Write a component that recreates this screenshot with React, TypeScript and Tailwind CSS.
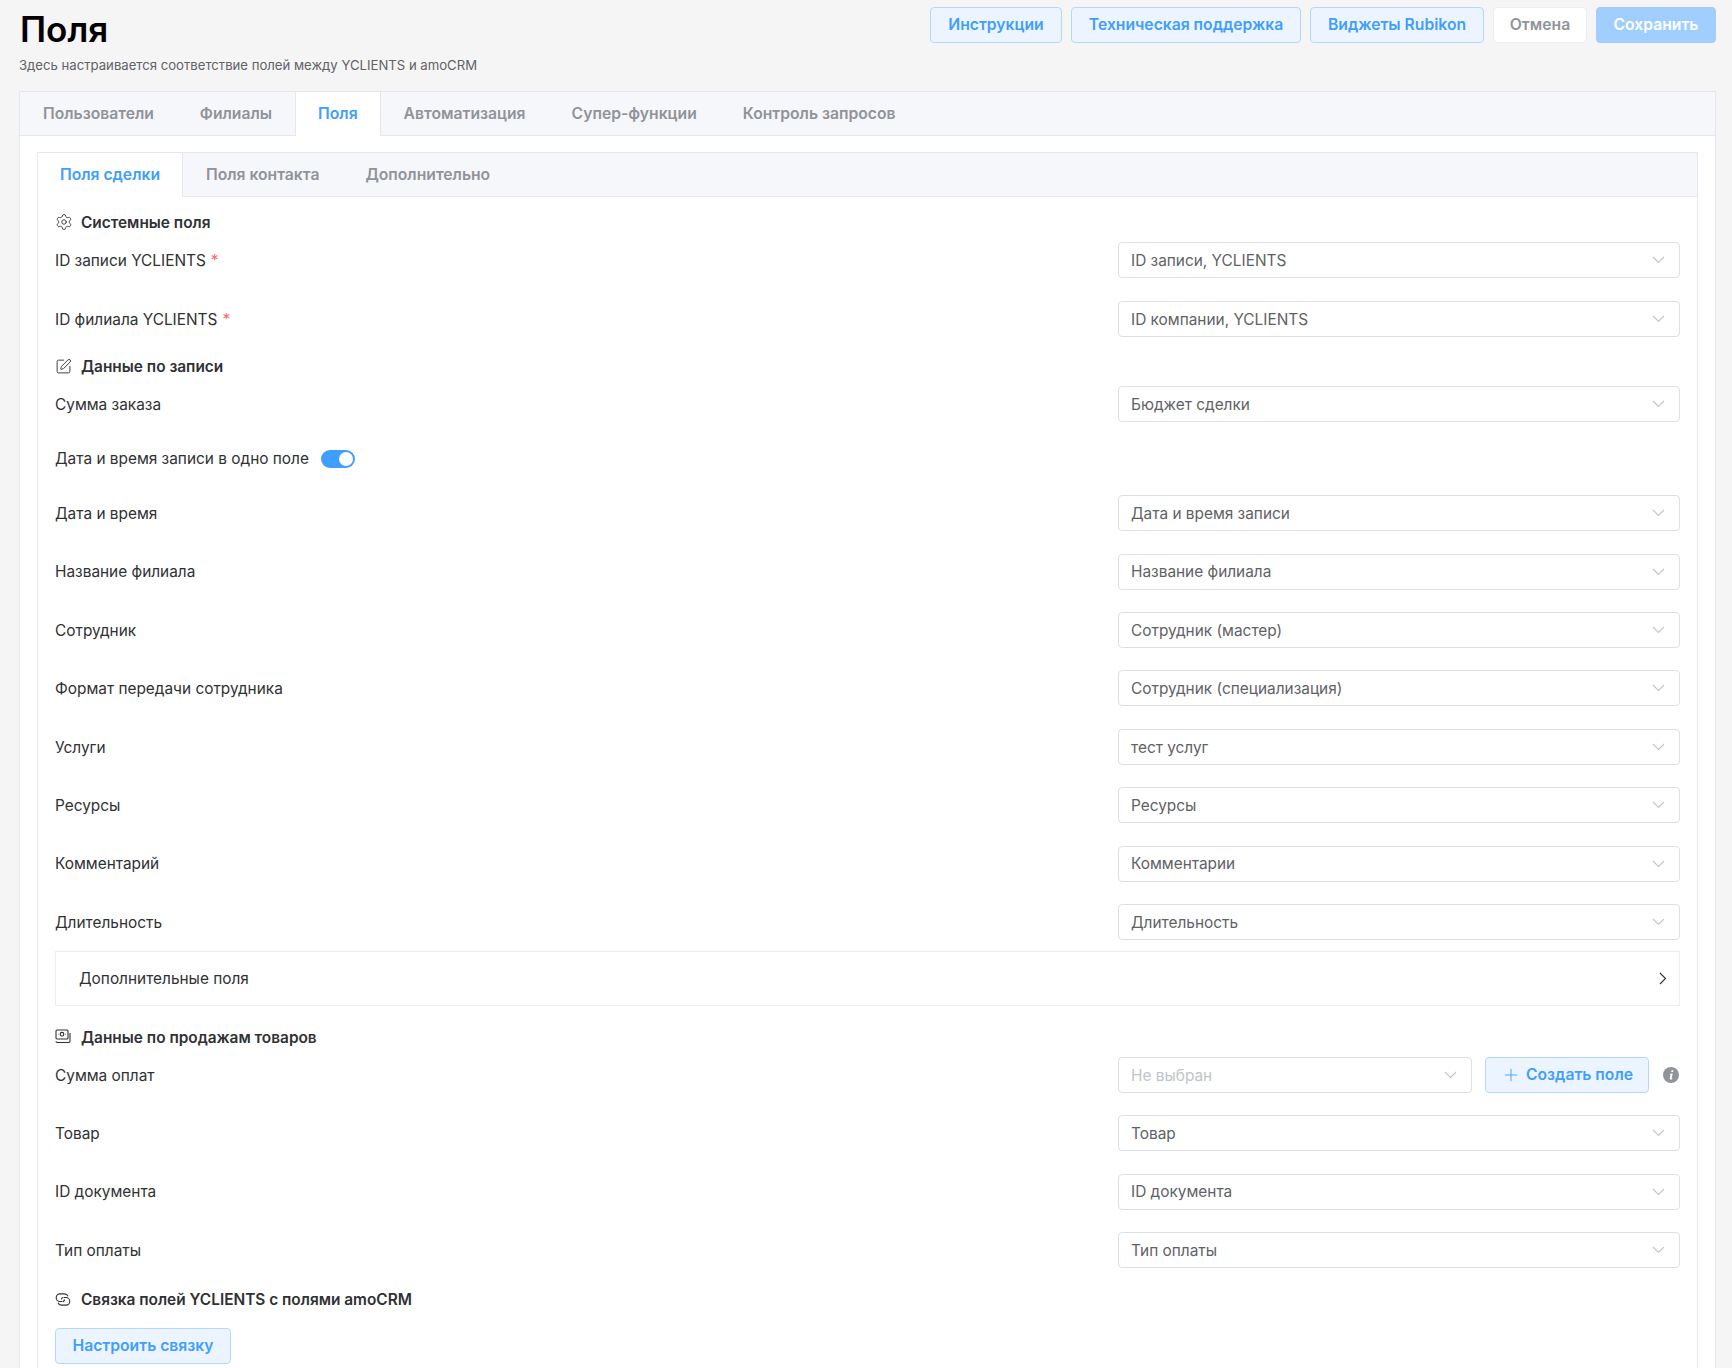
import { ReactNode } from "react";
import { Plus, Settings, SquarePen } from "lucide-react";

const ChevronDown = () => (
  <svg width="13" height="8" viewBox="0 0 13 8" fill="none" stroke="#c0c4cc" strokeWidth="1.1">
    <path d="M1 1l5.5 5.5L12 1" />
  </svg>
);

const ChevronRight = () => (
  <svg width="8" height="13" viewBox="0 0 8 13" fill="none" stroke="#303133" strokeWidth="1.1">
    <path d="M1 1l5.5 5.5L1 12" />
  </svg>
);

const MoneyIcon = () => (
  <svg width="16" height="15" viewBox="0 0 16 15" fill="none" stroke="#303133" strokeWidth="1.1">
    <rect x="1" y="1" width="12" height="9" rx="1" />
    <circle cx="7" cy="5.2" r="1.8" />
    <path d="M4 5.2h-.5M10.5 5.2H10" />
    <path d="M1 12.3c0 .8.5 1.2 1.2 1.2h11.6c.7 0 1.2-.5 1.2-1.2V4" />
  </svg>
);

const LinkIcon = () => (
  <svg width="16" height="15" viewBox="0 0 16 15" fill="none" stroke="#303133" strokeWidth="1.1">
    <path d="M7 9.5H5a3.8 3.8 0 0 1 0-7.6h4.5a3.8 3.8 0 0 1 3.5 2.4" />
    <path d="M9 5.5h2a3.8 3.8 0 0 1 0 7.6H6.5A3.8 3.8 0 0 1 3 10.7" />
    <path d="M6.5 7.5a2 2 0 0 1 2-2" />
    <path d="M9.5 7.5a2 2 0 0 1-2 2" />
  </svg>
);

const InfoIcon = () => (
  <svg width="16" height="16" viewBox="0 0 16 16">
    <circle cx="8" cy="8" r="8" fill="#909399" />
    <path d="M8.6 3.2h1.9l-.4 1.9H8.2zM7.8 6.4h1.9l-1 4.6c-.1.4.2.5.8.3l-.2.9c-1.5.6-2.9.4-2.5-1.3l.6-2.9-.9-.1z" fill="#fff" />
  </svg>
);

function Select({ value, placeholder }: { value: string; placeholder?: boolean }) {
  return (
    <div className="flex h-9 flex-1 items-center justify-between rounded border border-[#dcdfe6] bg-white pl-3 pr-3.5">
      <span className={`pt-px ${placeholder ? "text-[#c0c4cc]" : "text-[#606266]"}`}>{value}</span>
      <ChevronDown />
    </div>
  );
}

function Row({ label, value, required }: { label: string; value: string; required?: boolean }) {
  return (
    <div className="flex h-9 items-center">
      <div className="w-[1063px] pt-px text-[#303133]">
        {label}
        {required && <span className="ml-[5px] text-[#f56c6c]">*</span>}
      </div>
      <Select value={value} />
    </div>
  );
}

function Section({ icon, title }: { icon: ReactNode; title: string }) {
  return (
    <div className="mb-2.5 flex h-5 items-center font-semibold text-[#303133]">
      <span className="flex w-[26px] items-center">{icon}</span>
      <span className="pt-px">{title}</span>
    </div>
  );
}

function Button({ children, className }: { children: ReactNode; className?: string }) {
  return (
    <button className={`flex h-9 items-center justify-center rounded border text-[15.7px] font-semibold ${className}`}>
      {children}
    </button>
  );
}

const primary = "border-[#b3d8ff] bg-[#ecf5ff] text-[#409eff]";

function Tab({ label, active, first }: { label: string; active?: boolean; first?: boolean }) {
  if (active) {
    return (
      <div
        className={`-mb-px flex h-[44px] items-center bg-white px-[22px] text-[15.7px] font-semibold text-[#409eff] ${
          first ? "border-r border-[#e4e7ed]" : "border-x border-[#e4e7ed]"
        }`}
      >
        {label}
      </div>
    );
  }
  return <div className="flex h-[43px] items-center px-[23px] text-[15.7px] font-semibold text-[#909399]">{label}</div>;
}

const dealFields = [
  ["Дата и время", "Дата и время записи"],
  ["Название филиала", "Название филиала"],
  ["Сотрудник", "Сотрудник (мастер)"],
  ["Формат передачи сотрудника", "Сотрудник (специализация)"],
  ["Услуги", "тест услуг"],
  ["Ресурсы", "Ресурсы"],
  ["Комментарий", "Комментарии"],
  ["Длительность", "Длительность"],
];

export default function App() {
  return (
    <div className="h-screen overflow-hidden bg-[#f5f5f5] pl-[19px] pr-4 font-['Inter',sans-serif] text-[15.4px] leading-none">
      <div className="flex h-[91px] justify-between">
        <div>
          <h1 className="pl-px pt-[13px] text-[35px] font-semibold leading-8 text-black">Поля</h1>
          <p className="pt-[12px] text-[13.15px] leading-4 text-[#606266]">
            Здесь настраивается соответствие полей между YCLIENTS и amoCRM
          </p>
        </div>
        <div className="flex gap-[9px] pt-[7px]">
          <Button className={`w-[132px] ${primary}`}>Инструкции</Button>
          <Button className={`w-[230px] ${primary}`}>Техническая поддержка</Button>
          <Button className={`w-[174px] ${primary}`}>Виджеты Rubikon</Button>
          <Button className="w-[94px] border-[#ebeef5] bg-white text-[#909399]">Отмена</Button>
          <Button className="w-[120px] border-[#a0cfff] bg-[#a0cfff] text-white">Сохранить</Button>
        </div>
      </div>

      <div className="border border-[#e4e7ed] bg-white">
        <div className="flex h-[44px] border-b border-[#e4e7ed] bg-[#f5f7fa]">
          <Tab label="Пользователи" />
          <Tab label="Филиалы" />
          <Tab label="Поля" active />
          <Tab label="Автоматизация" />
          <Tab label="Супер-функции" />
          <Tab label="Контроль запросов" />
        </div>

        <div className="px-[17px] pt-4">
          <div className="border border-[#e4e7ed]">
            <div className="flex h-[44px] border-b border-[#e4e7ed] bg-[#f5f7fa]">
              <Tab label="Поля сделки" active first />
              <Tab label="Поля контакта" />
              <Tab label="Дополнительно" />
            </div>

            <div className="px-[17px] pb-10 pt-[15px]">
              <Section icon={<Settings size={18} strokeWidth={1.2} color="#303133" />} title="Системные поля" />
              <div className="flex flex-col gap-[23px]">
                <Row label="ID записи YCLIENTS" value="ID записи, YCLIENTS" required />
                <Row label="ID филиала YCLIENTS" value="ID компании, YCLIENTS" required />
              </div>

              <div className="mt-[19.4px]">
                <Section icon={<SquarePen size={17} strokeWidth={1.3} color="#303133" />} title="Данные по записи" />
              </div>
              <div className="flex flex-col gap-[22.4px]">
                <Row label="Сумма заказа" value="Бюджет сделки" />
                <div className="flex h-7 items-center text-[#303133]">
                  Дата и время записи в одно поле
                  <div className="ml-3 flex h-[18px] w-[34px] items-center justify-end rounded-full bg-[#409eff] pr-0.5">
                    <div className="h-3.5 w-3.5 rounded-full bg-white" />
                  </div>
                </div>
                {dealFields.map(([label, value]) => (
                  <Row key={label} label={label} value={value} />
                ))}
              </div>

              <div className="mt-[11px] flex h-[55px] items-center justify-between border border-[#ebeef5] pl-[23px] pr-3 text-[#303133]">
                <span className="pt-px">Дополнительные поля</span>
                <ChevronRight />
              </div>

              <div className="mt-[21px]">
                <Section icon={<MoneyIcon />} title="Данные по продажам товаров" />
              </div>
              <div className="flex flex-col gap-[22.4px]">
                <div className="flex h-9 items-center">
                  <div className="w-[1063px] pt-px text-[#303133]">Сумма оплат</div>
                  <Select value="Не выбран" placeholder />
                  <Button className={`ml-[13px] w-[164px] gap-[5px] ${primary}`}>
                    <Plus size={20} strokeWidth={1.1} />
                    Создать поле
                  </Button>
                  <span className="ml-[14px] mr-px">
                    <InfoIcon />
                  </span>
                </div>
                <Row label="Товар" value="Товар" />
                <Row label="ID документа" value="ID документа" />
                <Row label="Тип оплаты" value="Тип оплаты" />
              </div>

              <div className="mt-[21px]">
                <Section icon={<LinkIcon />} title="Связка полей YCLIENTS с полями amoCRM" />
              </div>
              <Button className={`mt-[19px] w-[176px] ${primary}`}>Настроить связку</Button>
            </div>
          </div>
        </div>
      </div>
    </div>
  );
}
